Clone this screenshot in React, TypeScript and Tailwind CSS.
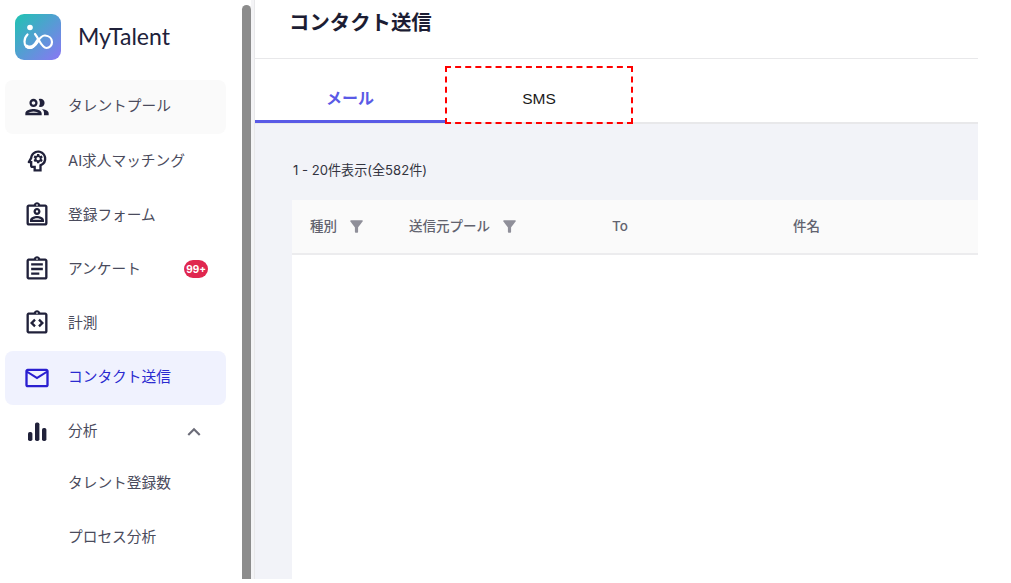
import React from "react";
import {
  MdOutlinePeople,
  MdOutlinePsychology,
  MdOutlineAssignmentInd,
  MdOutlineAssignment,
  MdOutlineIntegrationInstructions,
  MdOutlineEmail,
  MdKeyboardArrowUp,
  MdFilterAlt,
} from "react-icons/md";

const font = "font-['Inter','Noto_Sans_CJK_JP',sans-serif]";

function Logo() {
  return (
    <svg width="46" height="46" viewBox="0 0 46 46">
      <defs>
        <linearGradient id="lg" x1="0" y1="0" x2="1" y2="1">
          <stop offset="0" stopColor="#1fc4b2" />
          <stop offset="1" stopColor="#8a76f4" />
        </linearGradient>
      </defs>
      <rect width="46" height="46" rx="9" fill="url(#lg)" />
      <circle cx="15" cy="13.500" r="2.800" fill="#fff" />
      <path
        d="M12.500 20.500C10.500 22.500 9.500 25 9.500 27.500C9.500 31.500 12 34 15 34C22 34 23 21 30 21.500C34 21.800 37 24.500 37 28C37 31.500 34.500 34 31.500 34C26.500 34 24 25 20 20"
        fill="none"
        stroke="#fff"
        strokeWidth="2.200"
        strokeLinecap="round"
      />
      <path
        d="M12 32.500C16 34.500 20 31.500 22.500 27"
        fill="none"
        stroke="#fff"
        strokeWidth="3.600"
        strokeLinecap="round"
      />
    </svg>
  );
}

function BarsIcon({ size, className }: { size?: number; className?: string }) {
  return (
    <svg width={size} height={size} viewBox="0 0 28 28" fill="currentColor" className={className}>
      <rect x="5" y="14" width="4.400" height="9" rx="1.800" />
      <rect x="12" y="4.500" width="4.400" height="18.500" rx="1.800" />
      <rect x="19" y="10" width="4.400" height="13" rx="1.800" />
    </svg>
  );
}

type Item = {
  label: string;
  Icon?: React.ComponentType<{ size?: number; className?: string }>;
  hover?: boolean;
  active?: boolean;
  badge?: boolean;
  chevron?: boolean;
  firstSub?: boolean;
};

const items: Item[] = [
  { label: "タレントプール", Icon: MdOutlinePeople, hover: true },
  { label: "AI求人マッチング", Icon: MdOutlinePsychology },
  { label: "登録フォーム", Icon: MdOutlineAssignmentInd },
  { label: "アンケート", Icon: MdOutlineAssignment, badge: true },
  { label: "計測", Icon: MdOutlineIntegrationInstructions },
  { label: "コンタクト送信", Icon: MdOutlineEmail, active: true },
  { label: "分析", Icon: BarsIcon, chevron: true },
  { label: "タレント登録数", firstSub: true },
  { label: "プロセス分析" },
];

function NavRow({ item }: { item: Item }) {
  const { label, Icon, hover, active, badge, chevron, firstSub } = item;
  return (
    <div
      className={`flex h-[54.200px] items-center rounded-lg pl-[18px] pr-[18px] ${
        active ? "bg-[#f0f2fe]" : hover ? "bg-[#fafafa]" : ""
      } ${firstSub ? "-mt-[3px]" : ""}`}
    >
      <div className="flex w-[45px] shrink-0">
        {Icon && <Icon size={28} className={active ? "text-[#2a1fd0]" : "text-[#20213a]"} />}
      </div>
      <span
        className={`flex-1 text-[14.700px] leading-none ${
          active ? "text-[#2a2ad0]" : "text-[#4a4b5c]"
        }`}
      >
        {label}
      </span>
      {badge && (
        <span className="rounded-full bg-[#e0274f] px-[2px] py-[2px] text-[10px] font-bold leading-[14px] text-white">
          99+
        </span>
      )}
      {chevron && <MdKeyboardArrowUp size={26} className="-ml-[1px] mr-[1px] text-[#6b6c78]" />}
    </div>
  );
}

function Filter() {
  return <MdFilterAlt size={19} className="text-[#8f8f99]" />;
}

export default function App() {
  return (
    <div className={`${font} h-[583px] w-[1011px] overflow-hidden bg-white`}>
      <div className="flex h-[579px] w-[978px]">
        <aside className="flex w-[242px] shrink-0 flex-col pl-[5px] pr-[16px]">
          <div className="flex h-[79.600px] shrink-0 items-center gap-[17px] pb-[6px] pl-[10px]">
            <Logo />
            <span className="font-['Lato',sans-serif] text-[23px] leading-none text-[#20213a]">
              MyTalent
            </span>
          </div>
          <nav className="flex flex-col">
            {items.map((item) => (
              <NavRow key={item.label} item={item} />
            ))}
          </nav>
        </aside>
        <div className="w-[9px] shrink-0 pt-[5px]">
          <div className="h-full rounded-t-full bg-[#8c8c8c]" />
        </div>
        <div className="w-[3px] shrink-0 bg-[#f4f4f6]" />
        <main className="flex min-w-0 flex-1 flex-col border-l border-[#e8e8ea]">
          <header className="flex h-[59px] shrink-0 items-start border-b border-[#e8e8ea] pl-[34px] pt-[9px]">
            <h1 className="text-[20.400px] font-bold leading-[28px] text-[#1c1d33]">コンタクト送信</h1>
          </header>
          <div className="flex h-[65px] shrink-0 border-b-2 border-[#e8e8ea] bg-white">
            <div className="-mb-[2px] flex h-[64px] w-[190px] items-center justify-center border-b-[3px] border-[#5a5ae6] pt-[16px] text-[16px] font-bold text-[#5a5ae6]">
              メール
            </div>
            <div className="relative flex w-[188px] items-center justify-center pt-[16px] font-['Liberation_Sans',sans-serif] text-[15.500px] text-[#1a1a1a]">
              SMS
              <div className="absolute inset-x-0 bottom-[-2px] top-[7px] border-2 border-dashed border-[#ff0000]" />
            </div>
          </div>
          <div className="flex min-h-0 flex-1 flex-col bg-[#f2f3f8] pl-[37px]">
            <p className="ml-[1px] mt-[38px] h-[16px] text-[13.100px] leading-[16px] text-[#33343f]">
              1 - 20件表示(全582件)
            </p>
            <div className="mt-[22px] flex min-h-0 flex-1 flex-col rounded-tl-lg bg-white">
              <div className="flex h-[55px] shrink-0 items-center border-b-2 border-[#ececee] bg-[#fafafa] pb-[1px] text-[13.500px] font-medium text-[#62636f]">
                <div className="flex w-[117px] items-center gap-[10px] pl-[18px]">
                  種別 <Filter />
                </div>
                <div className="flex w-[203px] items-center gap-[10px]">
                  送信元プール <Filter />
                </div>
                <div className="w-[181px]">To</div>
                <div>件名</div>
              </div>
            </div>
          </div>
        </main>
      </div>
    </div>
  );
}
